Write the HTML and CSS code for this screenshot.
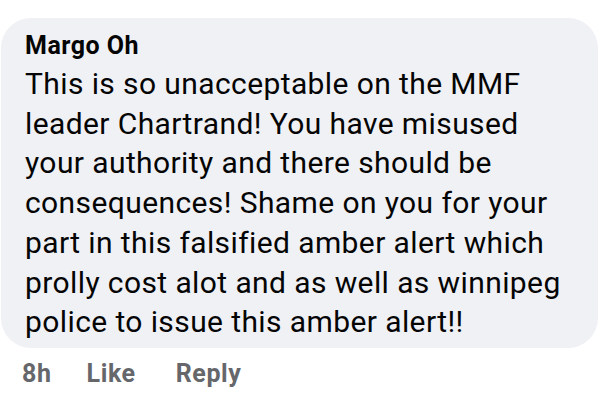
FILE: index.html
```html
<!DOCTYPE html>
<html>
	<head>
		<meta content="width=device-width, initial-scale=1" name="viewport" />
		<link rel="stylesheet" href="styles.css">
	</head>
	<body>
		<div class="comment">
			<div class="bubble">
				<div class="author">Margo Oh</div>
				<p class="text">This is so unacceptable on the MMF leader Chartrand! You have misused your authority and there should be consequences! Shame on you for your part in this falsified amber alert which prolly cost alot and as well as winnipeg police to issue this amber alert!!</p>
			</div>
			<div class="actions">
				<span class="time">8h</span>
				<span class="action">Like</span>
				<span class="action reply">Reply</span>
			</div>
		</div>
	</body>
</html>
```

FILE: styles.css
```css
body {
	margin: 0;
	background-color: #ffffff;
	font-family: Roboto, "Liberation Sans", sans-serif;
	color: #050505;
}
.comment {
	padding: 18px 15px 0 1px;
}
.bubble {
	background-color: #f0f1f5;
	border-radius: 30px;
	padding: 13px 22px 6px 24px;
}
.author {
	font-weight: bold;
	font-size: 25px;
	line-height: 30px;
	letter-spacing: 0.5px;
	margin-bottom: 3px;
}
.text {
	margin: 0;
	font-size: 30px;
	line-height: 39.7px;
	letter-spacing: 0.4px;
}
.actions {
	display: flex;
	gap: 35px;
	padding: 11px 0 0 21px;
	font-size: 25px;
	line-height: 30px;
	font-weight: bold;
	letter-spacing: 0.6px;
	color: #65676b;
}
.reply {
	margin-left: 5px;
}
```
